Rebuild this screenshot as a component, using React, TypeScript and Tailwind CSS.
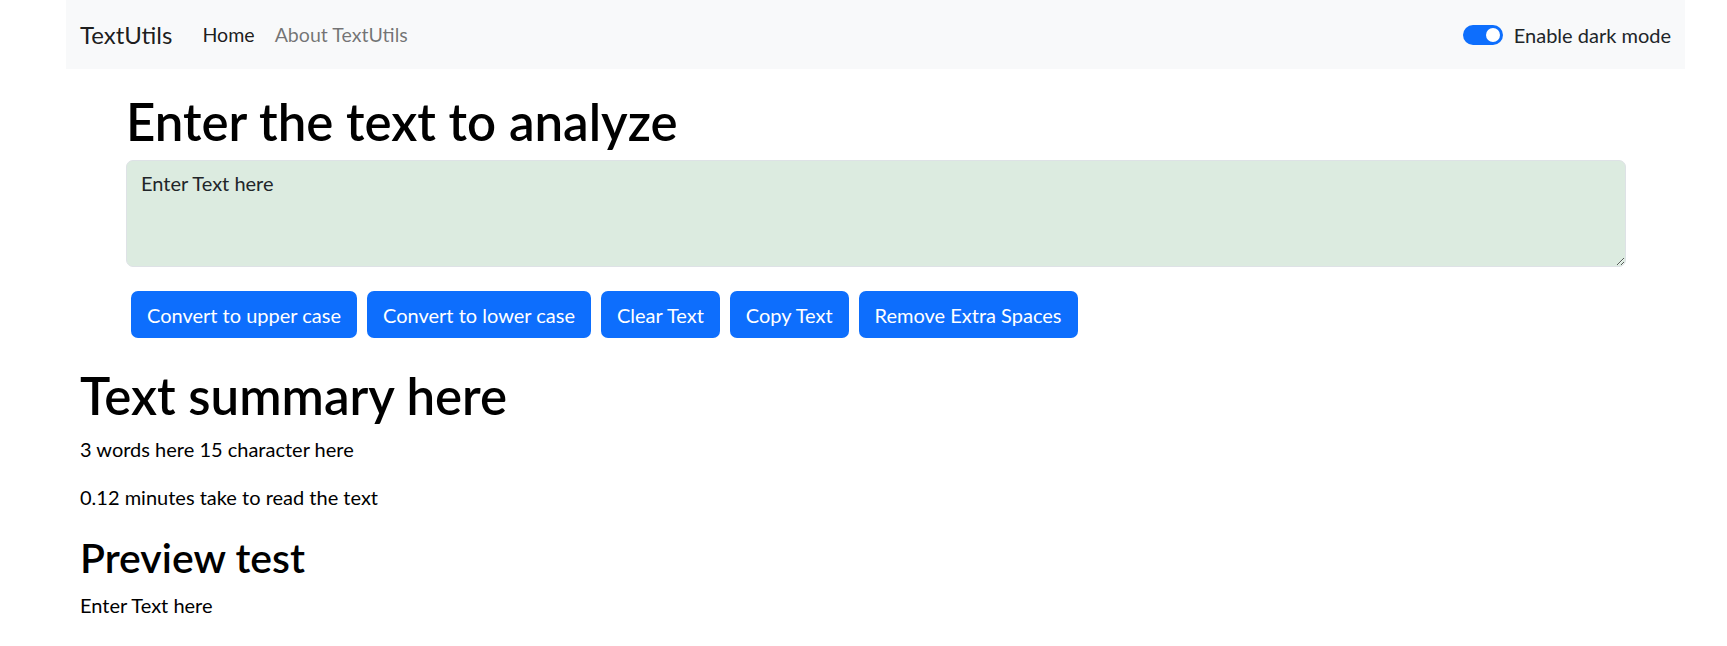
import { useState } from 'react';

const buttons = [
  'Convert to upper case',
  'Convert to lower case',
  'Clear Text',
  'Copy Text',
  'Remove Extra Spaces',
];

export default function App() {
  const [text, setText] = useState('Enter Text here');
  const words = text.split(/\s+/).filter((w) => w.length > 0).length;

  return (
    <div className="min-h-screen bg-white text-black font-['Lato','Noto_Sans',sans-serif]">
      {/* Navbar */}
      <nav className="ml-[66px] w-[1619px] h-[69px] bg-[#f8f9fa] flex items-center justify-between px-[14px]">
        <div className="flex items-center">
          <span className="text-[24px] text-black/90 mr-[20px]">TextUtils</span>
          <a className="px-[10px] text-[19.6px] text-black/90">Home</a>
          <a className="px-[10px] text-[19.6px] text-black/55">About TextUtils</a>
        </div>
        <div className="flex items-center gap-[11px]">
          <div className="w-[40px] h-[20px] rounded-full bg-[#0d6efd] flex items-center justify-end pr-[3px]">
            <div className="w-[14px] h-[14px] rounded-full bg-white" />
          </div>
          <span className="text-[20px] text-[#212529]">Enable dark mode</span>
        </div>
      </nav>

      {/* Form */}
      <div className="pl-[126px] w-[1626px] pt-[24px]">
        <h1 className="text-[51px] font-semibold leading-[58px] mb-[9px]">Enter the text to analyze</h1>
        <textarea
          rows={3}
          value={text}
          onChange={(e) => setText(e.target.value)}
          className="block w-[1500px] h-[107px] rounded-[7px] border border-[#dee2e6] bg-[#dcebe0] px-[14px] py-[8px] text-[20px] leading-[29px] text-[#212529] outline-none"
        />
        <div className="flex items-center gap-[10px] pl-[5px] mt-[24px]">
          {buttons.map((b) => (
            <button
              key={b}
              className="h-[47px] px-[16px] rounded-[7px] bg-[#0d6efd] text-white text-[20px]"
            >
              {b}
            </button>
          ))}
        </div>
      </div>

      {/* Summary */}
      <div className="pl-[80px] pt-[29px]">
        <h1 className="text-[51px] font-semibold leading-[58px] mb-[10px]">Text summary here</h1>
        <p className="text-[20px] leading-[29px] mb-[19px]">
          {words} words here {text.length} character here
        </p>
        <p className="text-[20px] leading-[29px] mb-[23px]">
          {(0.008 * 15).toFixed(2)} minutes take to read the text
        </p>
        <h2 className="text-[41px] font-semibold leading-[46px] mb-[10px]">Preview test</h2>
        <p className="text-[20px] leading-[29px]">{text}</p>
      </div>
    </div>
  );
}
